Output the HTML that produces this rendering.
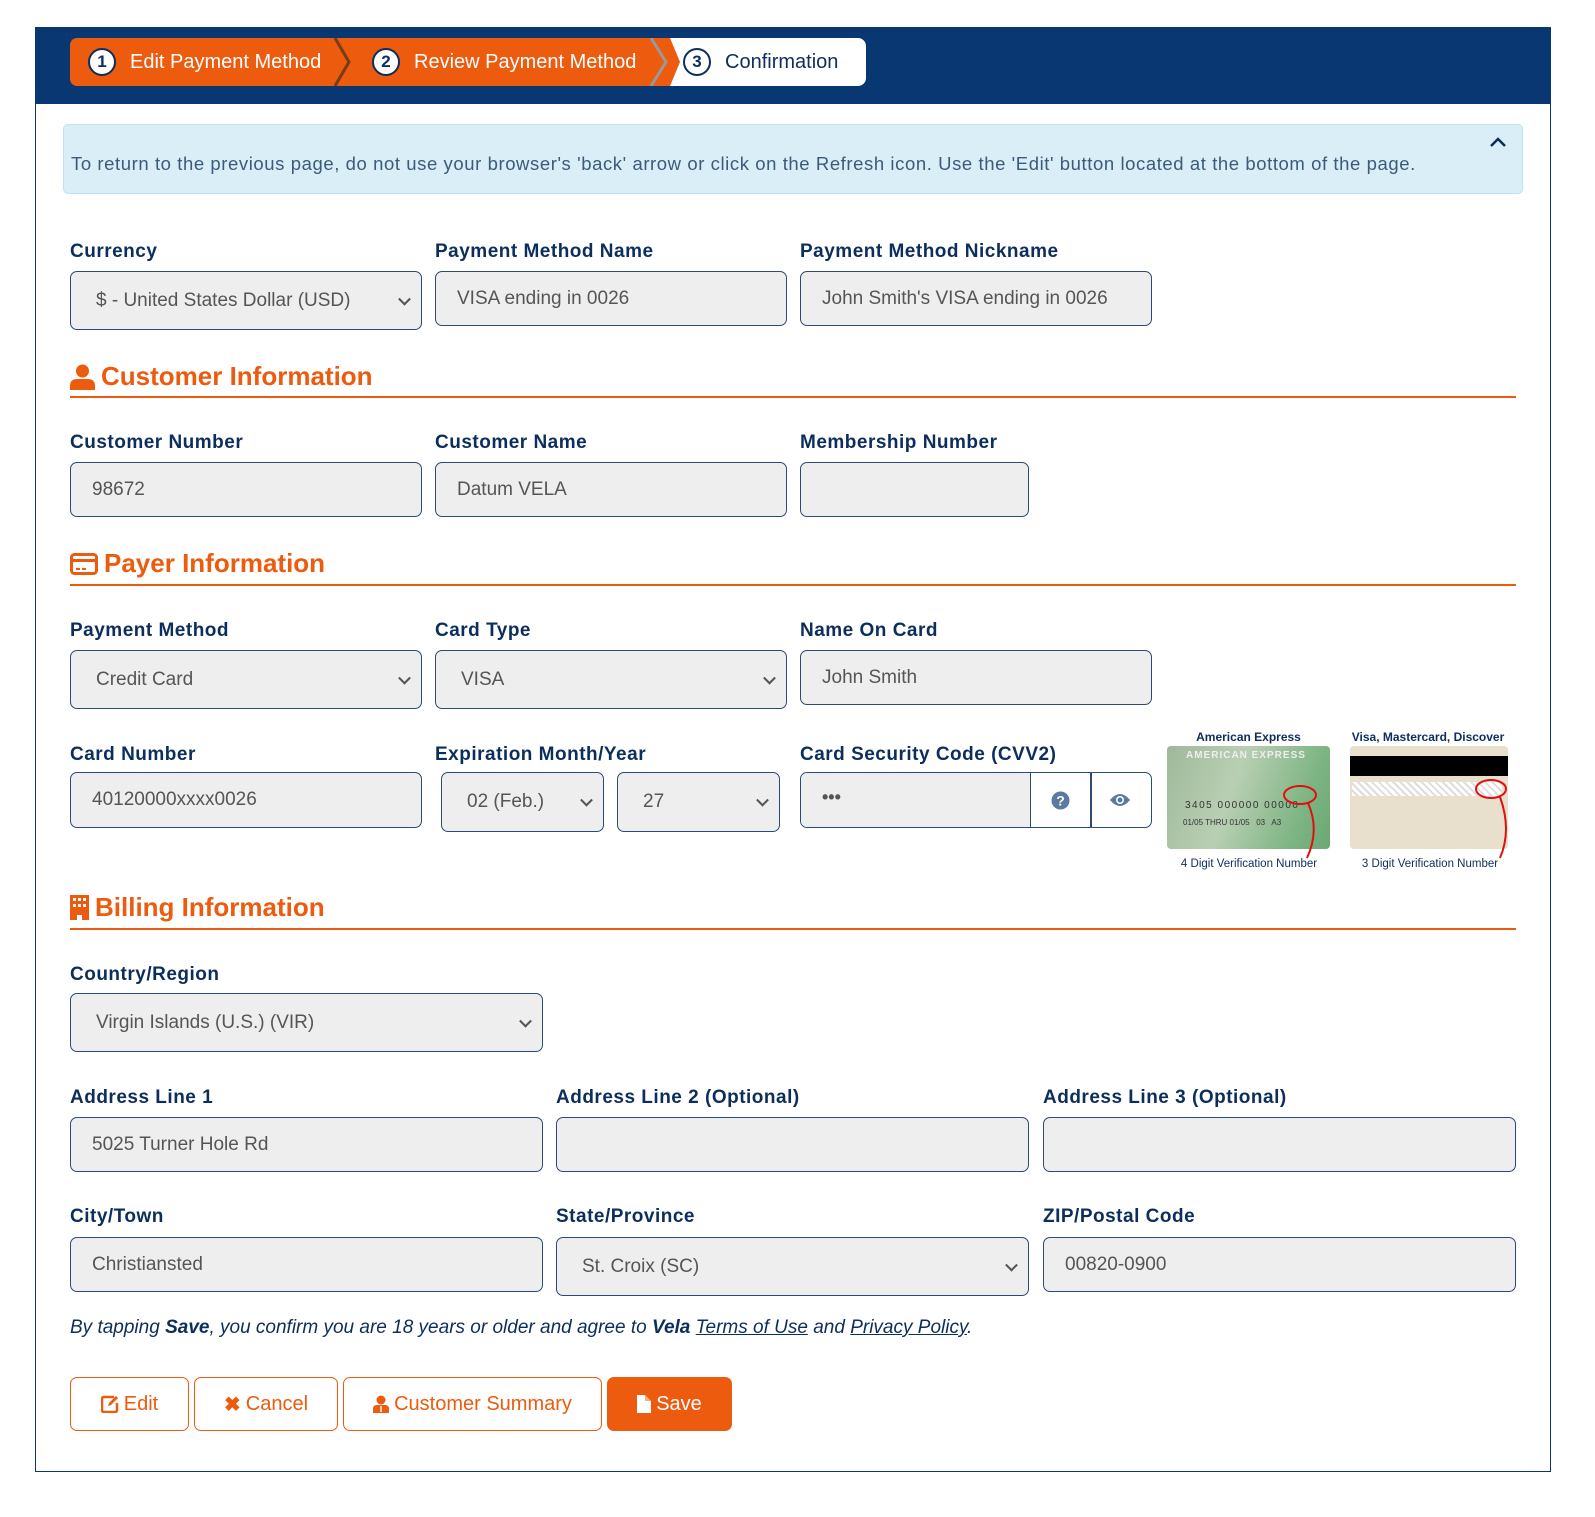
<!DOCTYPE html>
<html><head><meta charset="utf-8"><style>
*{box-sizing:border-box;margin:0;padding:0}
body{width:1595px;height:1517px;background:#fff;font-family:"Liberation Sans",sans-serif;position:relative;overflow:hidden}
.a{position:absolute}
.lab{position:absolute;font-weight:bold;font-size:19px;color:#0c2e5c;white-space:nowrap;letter-spacing:0.5px}
.in{position:absolute;background:#eeeeee;border:1.5px solid #2c4a74;border-radius:7px;font-size:19px;color:#555;padding-left:21px;display:flex;align-items:center;white-space:nowrap}
.sel{padding-left:25px}
.sel:after{content:"";position:absolute;right:12px;top:50%;width:7px;height:7px;border-right:2px solid #555;border-bottom:2px solid #555;transform:translateY(-70%) rotate(45deg)}
.sec{position:absolute;left:70px;font-weight:bold;font-size:26px;color:#ec5b0e;display:flex;align-items:center;gap:6px}
.line{position:absolute;left:70px;width:1446px;height:1.5px;background:#ec5b0e}
.btn{position:absolute;top:1377px;height:54px;border:1.5px solid #ec5b0e;border-radius:7px;color:#ec5b0e;font-size:20px;display:flex;align-items:center;justify-content:center;gap:5px;background:#fff}
.circ{display:inline-flex;width:28px;height:28px;border-radius:50%;border:2px solid #0c2e5c;background:#fff;color:#0c2e5c;font-weight:bold;font-size:17px;align-items:center;justify-content:center;margin-right:14px}
</style></head><body>
<div class="a" style="left:35px;top:27px;width:1516px;height:1445px;border:1px solid #083771"></div>
<div class="a" style="left:35px;top:27px;width:1516px;height:77px;background:#083771"></div>
<!-- steps -->
<div class="a" style="left:70px;top:38px;width:796px;height:48px;background:#fff;border-radius:8px"></div>
<svg class="a" style="left:70px;top:38px" width="610" height="48">
<path d="M8 0H600L610 24 600 48H8Q0 48 0 40V8Q0 0 8 0Z" fill="#ec5b0e"/>
<path d="M265 0L279 24 265 48" stroke="#7a3a15" stroke-width="3" fill="none"/>
<path d="M581 0L596 24 581 48" stroke="#999" stroke-width="3" fill="none"/>
</svg>
<div class="a" style="left:88px;top:38px;height:48px;display:flex;align-items:center;color:#fff;font-size:20px"><span class="circ">1</span>Edit Payment Method</div>
<div class="a" style="left:372px;top:38px;height:48px;display:flex;align-items:center;color:#fff;font-size:20px"><span class="circ">2</span>Review Payment Method</div>
<div class="a" style="left:683px;top:38px;height:48px;display:flex;align-items:center;color:#0c2e5c;font-size:20px"><span class="circ">3</span>Confirmation</div>
<!-- alert -->
<div class="a" style="left:63px;top:124px;width:1460px;height:70px;background:#d9eef7;border:1px solid #bde3f0;border-radius:5px"></div>
<div class="a" style="left:71px;top:153px;font-size:18.5px;color:#3d5a7a;white-space:nowrap;letter-spacing:0.58px">To return to the previous page, do not use your browser's 'back' arrow or click on the Refresh icon. Use the 'Edit' button located at the bottom of the page.</div>
<svg class="a" style="left:1489px;top:136px" width="18" height="12"><path d="M2 10L9 3 16 10" stroke="#0c2e5c" stroke-width="2.5" fill="none"/></svg>
<!-- row 1 -->
<div class="lab" style="left:70px;top:241px">Currency</div>
<div class="lab" style="left:435px;top:241px">Payment Method Name</div>
<div class="lab" style="left:800px;top:241px">Payment Method Nickname</div>
<div class="in sel" style="left:70px;top:271px;width:352px;height:59px">$ - United States Dollar (USD)</div>
<div class="in" style="left:435px;top:271px;width:352px;height:55px">VISA ending in 0026</div>
<div class="in" style="left:800px;top:271px;width:352px;height:55px">John Smith's VISA ending in 0026</div>
<!-- customer -->
<div class="sec" style="top:361px"><svg width="25" height="26" viewBox="0 0 25 26"><circle cx="12.5" cy="7" r="6.5" fill="#ec5b0e"/><path d="M0 26V22Q0 15 7 15H18Q25 15 25 22V26Z" fill="#ec5b0e"/></svg>Customer Information</div>
<div class="line" style="top:396px"></div>
<div class="lab" style="left:70px;top:432px">Customer Number</div>
<div class="lab" style="left:435px;top:432px">Customer Name</div>
<div class="lab" style="left:800px;top:432px">Membership Number</div>
<div class="in" style="left:70px;top:462px;width:352px;height:55px">98672</div>
<div class="in" style="left:435px;top:462px;width:352px;height:55px">Datum VELA</div>
<div class="in" style="left:800px;top:462px;width:229px;height:55px"></div>
<!-- payer -->
<div class="sec" style="top:548px"><svg width="28" height="22" viewBox="0 0 28 22"><rect x="1.5" y="1.5" width="25" height="19" rx="3" fill="none" stroke="#ec5b0e" stroke-width="3"/><rect x="1.5" y="6" width="25" height="3" fill="#ec5b0e"/><rect x="6" y="15" width="4" height="2" fill="#ec5b0e"/><rect x="12" y="15" width="4" height="2" fill="#ec5b0e"/></svg>Payer Information</div>
<div class="line" style="top:584px"></div>
<div class="lab" style="left:70px;top:620px">Payment Method</div>
<div class="lab" style="left:435px;top:620px">Card Type</div>
<div class="lab" style="left:800px;top:620px">Name On Card</div>
<div class="in sel" style="left:70px;top:650px;width:352px;height:59px">Credit Card</div>
<div class="in sel" style="left:435px;top:650px;width:352px;height:59px">VISA</div>
<div class="in" style="left:800px;top:650px;width:352px;height:55px">John Smith</div>
<div class="lab" style="left:70px;top:744px">Card Number</div>
<div class="lab" style="left:435px;top:744px">Expiration Month/Year</div>
<div class="lab" style="left:800px;top:744px">Card Security Code (CVV2)</div>
<div class="in" style="left:70px;top:772px;width:352px;height:56px">40120000xxxx0026</div>
<div class="in sel" style="left:441px;top:772px;width:163px;height:60px">02 (Feb.)</div>
<div class="in sel" style="left:617px;top:772px;width:163px;height:60px">27</div>
<div class="in" style="left:800px;top:772px;width:352px;height:56px;background:#fff;padding:0"></div>
<div class="a" style="left:801px;top:773px;width:230px;height:54px;background:#eee;border-radius:6px 0 0 6px;border-right:1.5px solid #2c4a74;font-size:18px;color:#555;padding:14px 0 0 21px;font-weight:bold">•••</div>
<div class="a" style="left:1090px;top:773px;width:1.5px;height:54px;background:#2c4a74"></div>
<svg class="a" style="left:1051px;top:791px" width="19" height="19" viewBox="0 0 19 19"><circle cx="9.5" cy="9.5" r="9" fill="#5a7aa0"/><text x="9.5" y="14.5" font-size="14" font-weight="bold" fill="#fff" text-anchor="middle" font-family="Liberation Sans">?</text></svg>
<svg class="a" style="left:1109px;top:792px" width="22" height="16" viewBox="0 0 22 16"><path d="M1 8Q11 -4 21 8Q11 20 1 8Z" fill="#5a7aa0"/><circle cx="11" cy="8" r="4" fill="#fff"/><circle cx="11" cy="8" r="2.5" fill="#5a7aa0"/></svg>
<!-- cards -->
<div class="a" style="left:1167px;top:730px;width:163px;text-align:center;font-size:12px;font-weight:bold;color:#0c2e5c">American Express</div>
<div class="a" style="left:1344px;top:730px;width:168px;text-align:center;font-size:12px;font-weight:bold;color:#0c2e5c;white-space:nowrap">Visa, Mastercard, Discover</div>
<div class="a" style="left:1167px;top:746px;width:163px;height:103px;border-radius:4px;background:linear-gradient(110deg,#9fb89a,#b9cfb3 40%,#7db483 80%,#6aa874)"></div>
<div class="a" style="left:1186px;top:750px;font-size:10px;font-weight:bold;color:#eee;letter-spacing:1px">AMERICAN EXPRESS</div>
<div class="a" style="left:1185px;top:800px;font-size:10px;color:#333;letter-spacing:1.5px">3405 000000 00000</div>
<div class="a" style="left:1183px;top:818px;font-size:8px;color:#333">01/05 THRU 01/05 &nbsp; 03 &nbsp; A3</div>
<div class="a" style="left:1350px;top:746px;width:158px;height:103px;border-radius:4px;background:#e8dfcc"></div>
<div class="a" style="left:1350px;top:756px;width:158px;height:20px;background:#000"></div>
<div class="a" style="left:1352px;top:782px;width:150px;height:14px;background:repeating-linear-gradient(45deg,#fff 0 3px,#ddd 3px 5px)"></div>
<svg class="a" style="left:1160px;top:740px" width="360" height="125"><ellipse cx="140" cy="55" rx="16" ry="9" stroke="#e01010" stroke-width="2" fill="none"/><path d="M148 63Q160 90 147 118" stroke="#e01010" stroke-width="2" fill="none"/><ellipse cx="331" cy="49" rx="15" ry="9" stroke="#e01010" stroke-width="2" fill="none"/><path d="M340 57Q352 90 340 118" stroke="#e01010" stroke-width="2" fill="none"/></svg>
<div class="a" style="left:1160px;top:858px;width:178px;text-align:center;font-size:11.5px;color:#0c2e5c">4 Digit Verification Number</div>
<div class="a" style="left:1340px;top:858px;width:180px;text-align:center;font-size:11.5px;color:#0c2e5c">3 Digit Verification Number</div>
<!-- billing -->
<div class="sec" style="top:892px"><svg width="19" height="25" viewBox="0 0 19 25"><path d="M0 0H19V25H12V20H7V25H0Z" fill="#ec5b0e"/><g fill="#fff"><rect x="3" y="3" width="3" height="3"/><rect x="8" y="3" width="3" height="3"/><rect x="13" y="3" width="3" height="3"/><rect x="3" y="9" width="3" height="3"/><rect x="8" y="9" width="3" height="3"/><rect x="13" y="9" width="3" height="3"/></g></svg>Billing Information</div>
<div class="line" style="top:928px"></div>
<div class="lab" style="left:70px;top:964px">Country/Region</div>
<div class="in sel" style="left:70px;top:993px;width:473px;height:59px">Virgin Islands (U.S.) (VIR)</div>
<div class="lab" style="left:70px;top:1087px">Address Line 1</div>
<div class="lab" style="left:556px;top:1087px">Address Line 2 (Optional)</div>
<div class="lab" style="left:1043px;top:1087px">Address Line 3 (Optional)</div>
<div class="in" style="left:70px;top:1117px;width:473px;height:55px">5025 Turner Hole Rd</div>
<div class="in" style="left:556px;top:1117px;width:473px;height:55px"></div>
<div class="in" style="left:1043px;top:1117px;width:473px;height:55px"></div>
<div class="lab" style="left:70px;top:1206px">City/Town</div>
<div class="lab" style="left:556px;top:1206px">State/Province</div>
<div class="lab" style="left:1043px;top:1206px">ZIP/Postal Code</div>
<div class="in" style="left:70px;top:1237px;width:473px;height:55px">Christiansted</div>
<div class="in sel" style="left:556px;top:1237px;width:473px;height:59px">St. Croix (SC)</div>
<div class="in" style="left:1043px;top:1237px;width:473px;height:55px">00820-0900</div>
<div class="a" style="left:70px;top:1317px;font-size:19px;font-style:italic;color:#0c2e5c;white-space:nowrap">By tapping <b>Save</b>, you confirm you are 18 years or older and agree to <b>Vela</b> <u>Terms of Use</u> and <u>Privacy Policy</u>.</div>
<!-- buttons -->
<div class="btn" style="left:70px;width:119px"><svg width="18" height="18" viewBox="0 0 18 18"><path d="M13 2H3Q1 2 1 4V15Q1 17 3 17H14Q16 17 16 15V8" stroke="#ec5b0e" stroke-width="2.5" fill="none"/><path d="M7 11L8 8 15 1 17 3 10 10Z" fill="#ec5b0e"/></svg>Edit</div>
<div class="btn" style="left:194px;width:144px"><span style="font-weight:bold;font-size:20px">✖</span>Cancel</div>
<div class="btn" style="left:343px;width:259px"><svg width="16" height="18" viewBox="0 0 16 18"><circle cx="8" cy="5" r="4.5" fill="#ec5b0e"/><path d="M0 18V14Q0 10 4 10H12Q16 10 16 14V18Z" fill="#ec5b0e"/><path d="M8 11V17" stroke="#fff" stroke-width="1.5"/></svg>Customer Summary</div>
<div class="btn" style="left:607px;width:125px;background:#ec5b0e;color:#fff"><svg width="14" height="18" viewBox="0 0 14 18"><path d="M0 0H8L14 6V18H0Z" fill="#fff"/><path d="M8 0V6H14" fill="#ec5b0e" opacity=".5"/></svg>Save</div>
</body></html>
